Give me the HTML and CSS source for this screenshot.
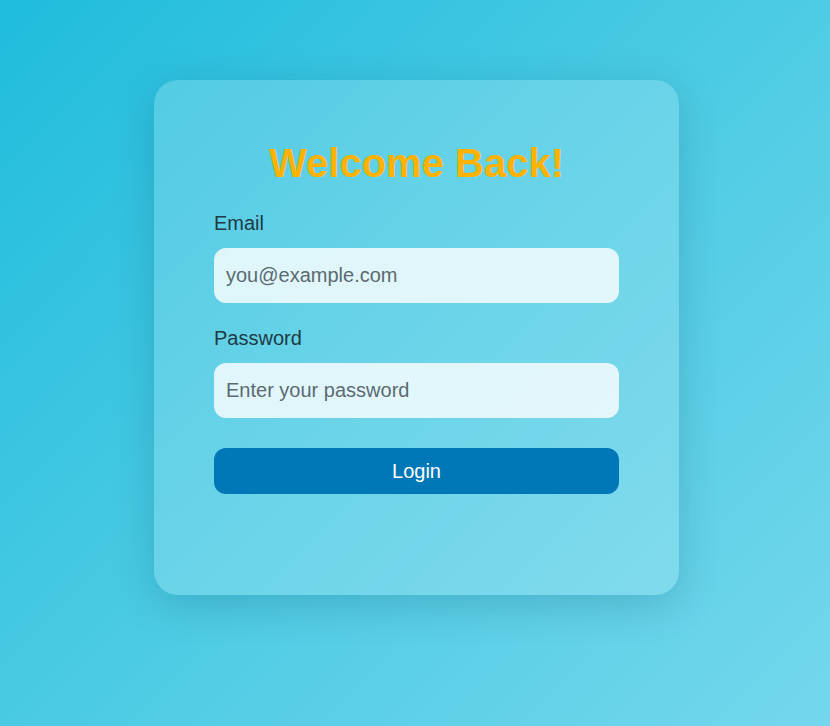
FILE: index.html
```html
<!DOCTYPE html>
<html lang="en">
<head>
<meta charset="utf-8">
<title>Login</title>
<link rel="stylesheet" href="styles.css">
</head>
<body>
<main class="page">
  <div class="card">
    <h1 class="title">Welcome Back!</h1>
    <form class="form">
      <div class="group">
        <label class="label" for="email">Email</label>
        <input class="input" id="email" type="email" placeholder="you@example.com">
      </div>
      <div class="group">
        <label class="label" for="password">Password</label>
        <input class="input" id="password" type="password" placeholder="Enter your password">
      </div>
      <button class="btn" type="button">Login</button>
    </form>
  </div>
</main>
</body>
</html>
```

FILE: styles.css
```css
* { box-sizing: border-box; }
html, body { margin: 0; height: 100%; }
body {
  font-family: "Liberation Sans", Arial, sans-serif;
  background: linear-gradient(135deg, #1fbcdc 0%, #4ccbe4 50%, #74d7ec 100%);
  min-height: 726px;
}
.page {
  display: flex;
  justify-content: center;
  padding: 80px 0 0 3px;
}
.card {
  width: 525px;
  padding: 60px 60px 101px;
  border-radius: 24px;
  background: rgba(255, 255, 255, 0.18);
  box-shadow: 0 10px 40px rgba(0, 60, 90, 0.2);
}
.title {
  margin: 0 0 26px;
  text-align: center;
  font-size: 40px;
  font-weight: bold;
  line-height: 46px;
  color: #ffb300;
}
.form { display: flex; flex-direction: column; }
.group { display: flex; flex-direction: column; margin-bottom: 24px; }
.label {
  font-size: 20px;
  line-height: 23px;
  color: #1e3a44;
  margin-bottom: 13px;
}
.input {
  height: 55px;
  border: none;
  border-radius: 12px;
  padding: 0 12px;
  font-family: "Liberation Sans", Arial, sans-serif;
  font-size: 20px;
  color: #333;
  background: rgba(255, 255, 255, 0.8);
  outline: none;
}
.input::placeholder { color: #5b6a70; }
.btn {
  margin-top: 6px;
  height: 46px;
  border: none;
  border-radius: 12px;
  background: #0077b6;
  color: #fff;
  font-family: "Liberation Sans", Arial, sans-serif;
  font-size: 20px;
}
```
